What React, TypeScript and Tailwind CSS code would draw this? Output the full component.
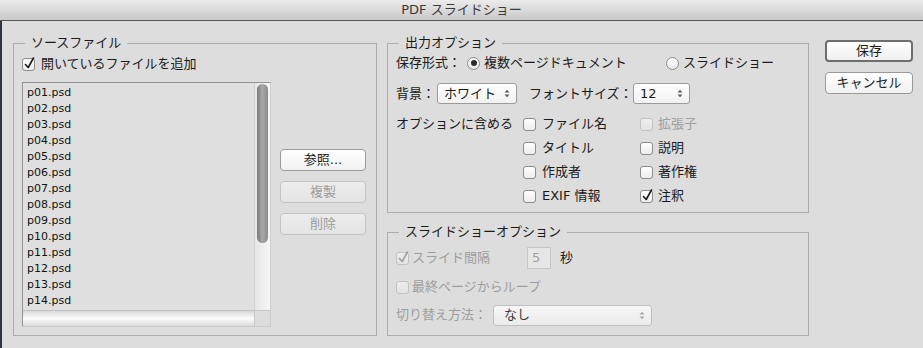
import React from 'react';

const files = Array.from({ length: 14 }, (_, i) => `p${String(i + 1).padStart(2, '0')}.psd`);

function Check({ checked = false, disabled = false }: { checked?: boolean; disabled?: boolean }) {
  return (
    <span
      className={`relative w-[13px] h-[13px] shrink-0 rounded-[3px] border bg-linear-to-b ${
        disabled ? 'border-[#c2c2c2] from-[#eeeeee] to-[#e2e2e2]' : 'border-[#8c8c8c] from-[#ffffff] to-[#ececec]'
      }`}
    >
      {checked && (
        <svg width="13" height="14" viewBox="0 0 13 14" className="absolute left-[0px] top-[-3px]">
          <path
            d="M2.5 8.5 L5.2 11.5 L10.5 2"
            fill="none"
            stroke={disabled ? '#9c9c9c' : '#1b1b1b'}
            strokeWidth="1.6"
            strokeLinecap="round"
            strokeLinejoin="round"
          />
        </svg>
      )}
    </span>
  );
}

function Radio({ selected = false }: { selected?: boolean }) {
  return (
    <span className="w-[13px] h-[13px] shrink-0 rounded-full border border-[#8c8c8c] bg-linear-to-b from-[#ffffff] to-[#e9e9e9] flex items-center justify-center">
      {selected && <span className="w-[6px] h-[6px] rounded-full bg-[#2b2b2b]" />}
    </span>
  );
}

function Arrows({ color = '#555555' }: { color?: string }) {
  return (
    <svg width="6" height="9" viewBox="0 0 6 9">
      <path d="M0.5 3.5 L3 0.8 L5.5 3.5 Z" fill={color} />
      <path d="M0.5 5.5 L3 8.2 L5.5 5.5 Z" fill={color} />
    </svg>
  );
}

function Select({ value, className, disabled = false }: { value: string; className: string; disabled?: boolean }) {
  return (
    <div
      className={`h-[21px] rounded-[3px] border bg-linear-to-b flex items-center justify-between pl-[6px] pr-[6px] ${
        disabled ? 'border-[#c0c0c0] from-[#f6f6f6] to-[#ebebeb] text-[#3a3a3a]' : 'border-[#9b9b9b] from-[#ffffff] to-[#f1f1f1]'
      } ${className}`}
    >
      <span>{value}</span>
      <Arrows color={disabled ? '#a8a8a8' : '#5a5a5a'} />
    </div>
  );
}

function Btn({ label, disabled = false, primary = false, className = '' }: { label: string; disabled?: boolean; primary?: boolean; className?: string }) {
  return (
    <div
      className={`h-[22px] rounded-[4px] bg-linear-to-b flex items-center justify-center ${
        primary
          ? 'border-2 border-[#6e6e6e] from-[#ffffff] to-[#f0f0f0]'
          : disabled
          ? 'border border-[#c4c4c4] from-[#ececec] to-[#e4e4e4] text-[#9d9d9d]'
          : 'border border-[#9a9a9a] from-[#ffffff] to-[#f1f1f1]'
      } ${className}`}
    >
      {label}
    </div>
  );
}

function Group({ title, className, children }: { title: string; className: string; children: React.ReactNode }) {
  return (
    <fieldset className={`border border-[#adadad] ${className}`}>
      <legend className="ml-[11px] px-[6px] leading-[16px] text-[#1a1a1a]">{title}</legend>
      {children}
    </fieldset>
  );
}

export default function App() {
  return (
    <div className="w-[923px] h-[348px] bg-[#dddddd] flex flex-col overflow-hidden text-[13px] leading-[16px] text-[#1a1a1a] font-['DejaVu_Sans','Noto_Sans_CJK_JP',sans-serif]">
      {/* title bar */}
      <div className="h-[21px] shrink-0 bg-linear-to-b from-[#ececec] to-[#c8c8c8] border-b border-[#575757] flex items-center justify-center text-[#3a3a3a]">
        PDF スライドショー
      </div>

      <div className="flex-1 flex border-l-2 border-[#2f3541] pl-[11px] pt-[14px]">
        {/* source files */}
        <Group title="ソースファイル" className="w-[364px] h-[301px] shrink-0">
          <div className="pl-[8px] pt-[5px]">
            <div className="flex items-center h-[16px] gap-[6px]">
              <Check checked />
              <span>開いているファイルを追加</span>
            </div>
            <div className="flex mt-[10px]">
              <div className="w-[249px] h-[245px] border border-[#949494] border-r-[#cdcdcd] border-b-[#cdcdcd] bg-[#dfdfdf] flex flex-col">
                <div className="flex flex-1 min-h-0">
                  <div className="flex-1 pl-[4px] pt-[2px] text-[11px] text-[#111111]">
                    {files.map((f) => (
                      <div key={f} className="h-[16px] leading-[16px]">{f}</div>
                    ))}
                  </div>
                  <div className="w-[16px] border-l border-[#d0d0d0] bg-linear-to-r from-[#e6e6e6] to-[#f6f6f6] pt-[1px] pl-[2px]">
                    <div className="w-[11px] h-[159px] rounded-full bg-linear-to-r from-[#7c7c7c] via-[#a8a8a8] to-[#8a8a8a]" />
                  </div>
                </div>
                <div className="h-[16px] flex">
                  <div className="flex-1 border-t border-[#c2c2c2] bg-linear-to-b from-[#d8d8d8] via-[#fbfbfb] to-[#dcdcdc]" />
                  <div className="w-[16px] border-t border-l border-[#c8c8c8] bg-[#dcdcdc]" />
                </div>
              </div>
              <div className="ml-[9px] pt-[67px] w-[86px] flex flex-col gap-[10px]">
                <Btn label="参照..." />
                <Btn label="複製" disabled />
                <Btn label="削除" disabled />
              </div>
            </div>
          </div>
        </Group>

        {/* middle column */}
        <div className="ml-[10px] w-[422px] shrink-0 flex flex-col gap-[11px]">
          <Group title="出力オプション" className="h-[178px]">
            <div className="pl-[8px] pt-[3px]">
              <div className="h-[18px] flex items-center">
                <span className="w-[71px]">保存形式：</span>
                <div className="w-[199px] flex items-center gap-[4px]">
                  <Radio selected />
                  <span>複数ページドキュメント</span>
                </div>
                <div className="flex items-center gap-[4px]">
                  <Radio />
                  <span>スライドショー</span>
                </div>
              </div>
              <div className="mt-[11px] h-[21px] flex items-center">
                <span className="w-[41px]">背景：</span>
                <Select value="ホワイト" className="w-[80px]" />
                <span className="ml-[12px] w-[104px]">フォントサイズ：</span>
                <Select value="12" className="w-[57px]" />
              </div>
              <div className="mt-[12px] flex">
                <span className="w-[127px] h-[16px] flex items-center">オプションに含める</span>
                <div className="grid grid-cols-[117px_auto] gap-y-[8px]">
                  <div className="h-[16px] flex items-center gap-[6px]"><Check /><span>ファイル名</span></div>
                  <div className="h-[16px] flex items-center gap-[5px] text-[#a0a0a0]"><Check disabled /><span>拡張子</span></div>
                  <div className="h-[16px] flex items-center gap-[6px]"><Check /><span>タイトル</span></div>
                  <div className="h-[16px] flex items-center gap-[5px]"><Check /><span>説明</span></div>
                  <div className="h-[16px] flex items-center gap-[6px]"><Check /><span>作成者</span></div>
                  <div className="h-[16px] flex items-center gap-[5px]"><Check /><span>著作権</span></div>
                  <div className="h-[16px] flex items-center gap-[6px]"><Check /><span>EXIF 情報</span></div>
                  <div className="h-[16px] flex items-center gap-[5px]"><Check checked /><span>注釈</span></div>
                </div>
              </div>
            </div>
          </Group>

          <Group title="スライドショーオプション" className="h-[112px]">
            <div className="pl-[8px] pt-[7px]">
              <div className="h-[22px] flex items-center">
                <div className="w-[131px] flex items-center gap-[3px] text-[#9d9d9d]">
                  <Check checked disabled />
                  <span>スライド間隔</span>
                </div>
                <div className="w-[24px] h-[22px] border border-[#c6c6c6] bg-[#e6e6e6] pl-[4px] flex items-center text-[#a0a0a0]">5</div>
                <span className="ml-[9px]">秒</span>
              </div>
              <div className="mt-[10px] h-[16px] flex items-center gap-[3px] text-[#9d9d9d]">
                <Check disabled />
                <span>最終ページからループ</span>
              </div>
              <div className="mt-[9px] h-[22px] flex items-center">
                <span className="w-[97px] text-[#9d9d9d]">切り替え方法：</span>
                <Select value="なし" className="w-[159px] pl-[10px]" disabled />
              </div>
            </div>
          </Group>
        </div>

        {/* right buttons */}
        <div className="ml-[16px] pt-[5px] w-[88px] shrink-0 flex flex-col gap-[10px]">
          <Btn label="保存" primary />
          <Btn label="キャンセル" />
        </div>
      </div>
    </div>
  );
}
